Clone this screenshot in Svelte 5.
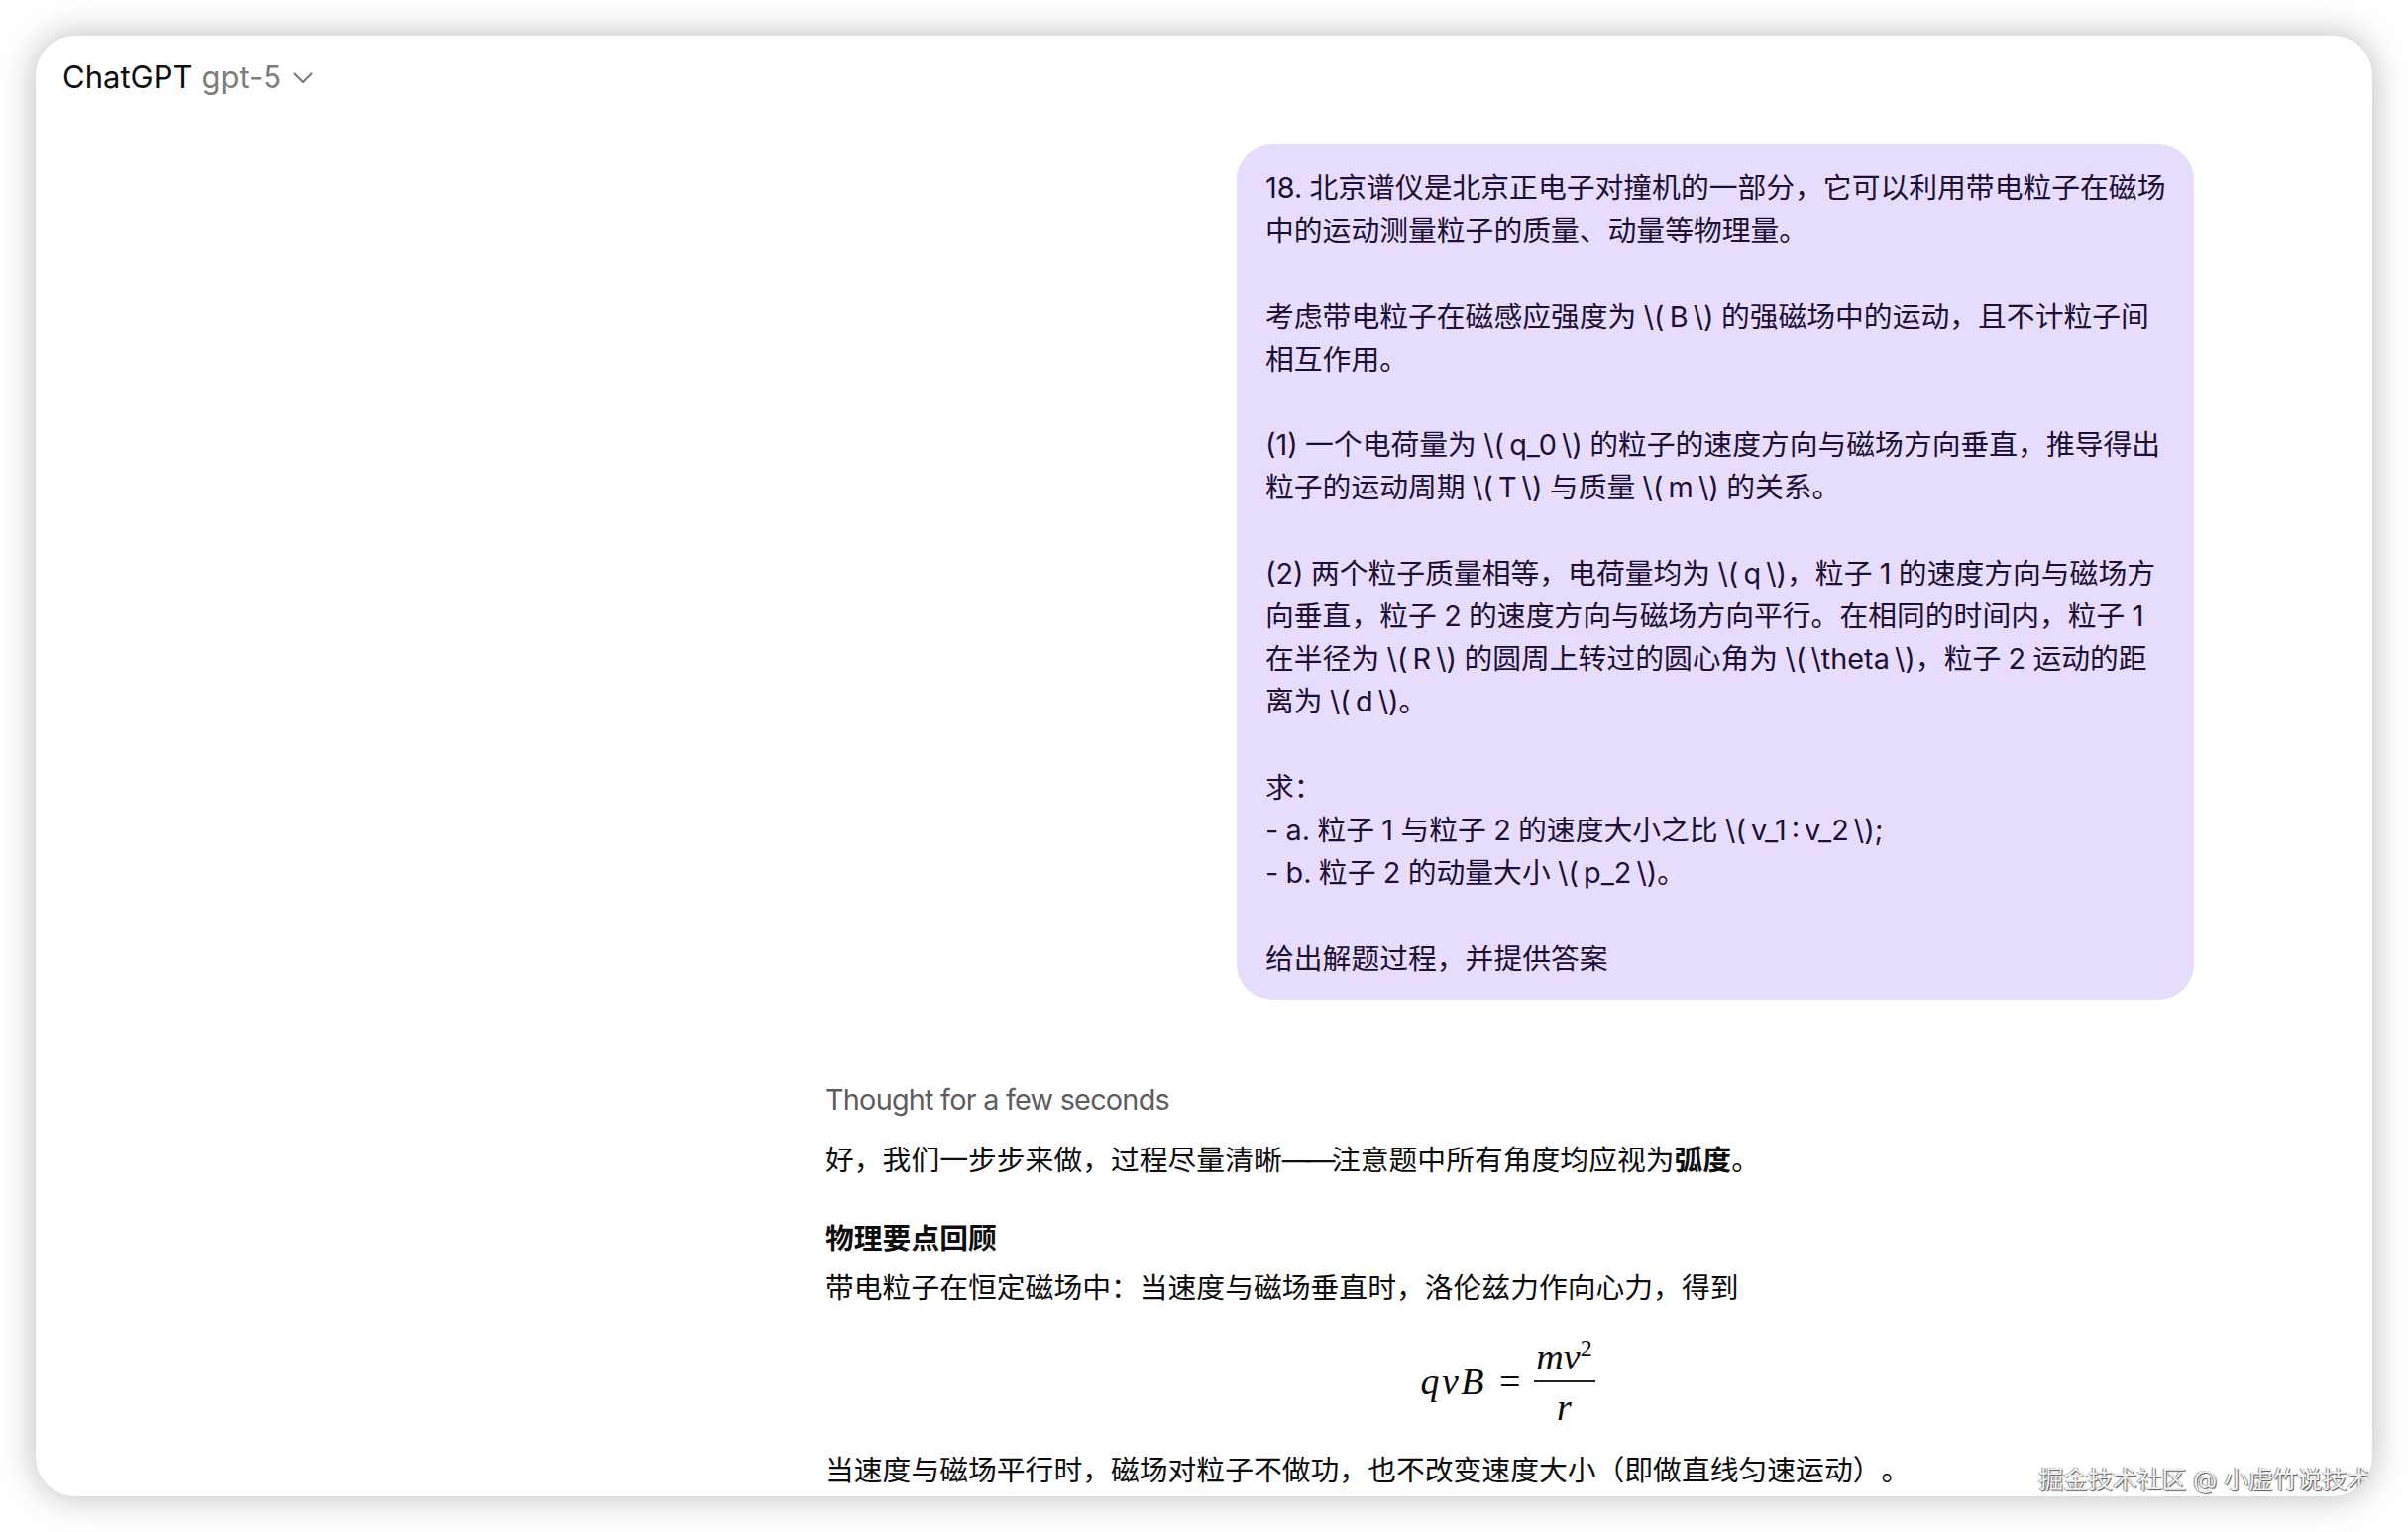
<script>
  const promptText = `18. 北京谱仪是北京正电子对撞机的一部分，它可以利用带电粒子在磁场
中的运动测量粒子的质量、动量等物理量。

考虑带电粒子在磁感应强度为 \\( B \\) 的强磁场中的运动，且不计粒子间
相互作用。

(1) 一个电荷量为 \\( q_0 \\) 的粒子的速度方向与磁场方向垂直，推导得出
粒子的运动周期 \\( T \\) 与质量 \\( m \\) 的关系。

(2) 两个粒子质量相等，电荷量均为 \\( q \\)，粒子 1 的速度方向与磁场方
向垂直，粒子 2 的速度方向与磁场方向平行。在相同的时间内，粒子 1
在半径为 \\( R \\) 的圆周上转过的圆心角为 \\( \\theta \\)，粒子 2 运动的距
离为 \\( d \\)。

求：
- a. 粒子 1 与粒子 2 的速度大小之比 \\( v_1 : v_2 \\);
- b. 粒子 2 的动量大小 \\( p_2 \\)。

给出解题过程，并提供答案`;

  // odd entries of each line are the raw \( ... \) segments, they sit tighter than the prose
  const promptLines = promptText.split("\n").map(line => line.split(/(\\\(.*?\\\))/));
</script>

<div class="page">
  <div class="window">
    <header class="topbar">
      <span class="brand">ChatGPT</span>
      <span class="model">gpt-5</span>
      <svg class="chevron" width="20" height="12" viewBox="0 0 20 12" fill="none">
        <path d="M1.5 1.5 L10 10 L18.5 1.5" stroke="#777" stroke-width="2" stroke-linecap="round" stroke-linejoin="round" />
      </svg>
    </header>

    <main class="thread">
      <div class="bubble">
        {#each promptLines as parts}
          <div class="line">{#each parts as part, i}{#if i % 2}<span class="math">{part}</span>{:else}{part}{/if}{/each}</div>
        {/each}
      </div>

      <div class="answer">
        <div class="thought">Thought for a few seconds</div>
        <p class="intro">好，我们一步步来做，过程尽量清晰<span class="dash">——</span>注意题中所有角度均应视为<strong>弧度</strong>。</p>
        <h3>物理要点回顾</h3>
        <p>带电粒子在恒定磁场中：当速度与磁场垂直时，洛伦兹力作向心力，得到</p>
        <div class="formula">
          <span class="lhs">qvB</span>
          <span class="eq">=</span>
          <span class="frac">
            <span class="num">mv<sup>2</sup></span>
            <span class="den">r</span>
          </span>
        </div>
        <p>当速度与磁场平行时，磁场对粒子不做功，也不改变速度大小（即做直线匀速运动）。</p>
      </div>
    </main>

    <div class="watermark">掘金技术社区 @ 小虚竹说技术</div>
  </div>
</div>

<style>
  :global(body) {
    margin: 0;
    background: #fff;
  }

  .page {
    width: 2430px;
    height: 1546px;
    padding: 36px;
    box-sizing: border-box;
    overflow: hidden;
    font-family: Inter, "Noto Sans CJK SC", sans-serif;
    color: #0d0d0d;
    text-spacing-trim: space-all;
  }

  .window {
    position: relative;
    height: 100%;
    background: #fff;
    border-radius: 40px;
    box-shadow: 0 0 36px rgba(0, 0, 0, 0.28);
    overflow: hidden;
  }

  .topbar {
    display: flex;
    align-items: center;
    height: 78px;
    padding: 4px 0 0 27px;
    box-sizing: border-box;
    font-size: 31px;
    line-height: 1;
  }

  .model {
    margin-left: 9px;
    color: #7d7d7d;
  }

  .chevron {
    margin: 3px 0 0 12px;
  }

  .thread {
    display: flex;
    flex-direction: column;
    padding: 31px 180px 0 797px;
  }

  .bubble {
    align-self: flex-end;
    width: 966px;
    height: 864px;
    box-sizing: border-box;
    padding: 23px 10px 0 29px;
    background: #e7dcfc;
    border-radius: 36px;
    color: #1c0f33;
    font-size: 28.8px;
    line-height: 43.2px;
    word-spacing: -0.75px;
  }

  .line {
    min-height: 43.2px;
    white-space: pre;
  }

  .math {
    word-spacing: -3px;
  }

  .answer {
    padding-top: 79px;
    font-size: 28.8px;
    line-height: 44px;
  }

  .thought {
    color: #5d5d5d;
    margin-bottom: 17px;
    letter-spacing: -0.75px;
  }

  p {
    margin: 0;
  }

  .intro {
    margin-bottom: 35px;
  }

  .dash {
    letter-spacing: -3.7px;
  }

  strong,
  h3 {
    font-weight: 700;
  }

  h3 {
    margin: 0 0 6px;
    font-size: 28.8px;
    line-height: 44px;
  }

  .formula {
    display: flex;
    align-items: center;
    justify-content: center;
    gap: 13px;
    height: 122px;
    margin: 11px 0 7px;
    padding-right: 4px;
    font-family: "Liberation Serif", serif;
    font-size: 38px;
    font-style: italic;
    line-height: 1;
  }

  .lhs {
    letter-spacing: 2.5px;
  }

  .eq {
    font-style: normal;
  }

  .frac {
    display: flex;
    flex-direction: column;
    align-items: center;
    min-width: 62px;
  }

  .num {
    padding-bottom: 5px;
    border-bottom: 2px solid #222;
    width: 100%;
    text-align: center;
  }

  .num sup {
    font-size: 24px;
    font-style: normal;
    line-height: 0;
  }

  .den {
    padding-top: 6px;
  }

  .watermark {
    position: absolute;
    right: 1px;
    bottom: 0;
    font-size: 24.8px;
    line-height: 34px;
    color: rgba(255, 255, 255, 0.92);
    text-shadow: 1px 1px 1px #555, -1px 0 1px #888;
    white-space: nowrap;
  }
</style>
